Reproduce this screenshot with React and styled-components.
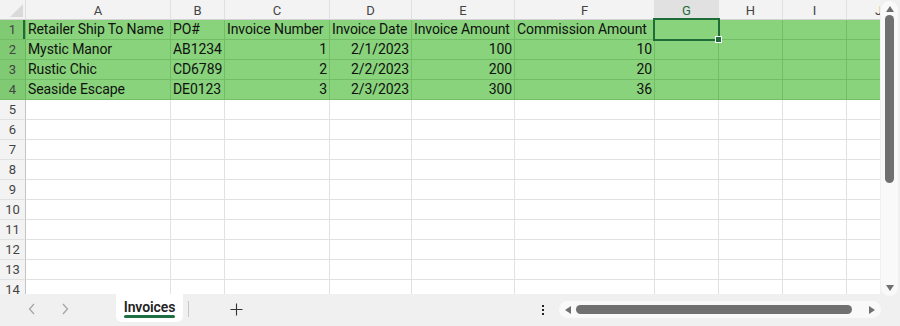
import React from "react";
import styled, { createGlobalStyle, css } from "styled-components";

const Global = createGlobalStyle`
  html, body { margin: 0; padding: 0; background: #f0f0f0; }
  * { box-sizing: border-box; }
`;

const COLS = [145, 54, 105, 82, 103, 140, 64, 64, 64, 64];
const LETTERS = ["A", "B", "C", "D", "E", "F", "G", "H", "I", "J"];
const SELECTED_COL = 6;

const DATA = [
  [
    { v: "Retailer Ship To Name" },
    { v: "PO#" },
    { v: "Invoice Number" },
    { v: "Invoice Date" },
    { v: "Invoice Amount" },
    { v: "Commission Amount" },
  ],
  [
    { v: "Mystic Manor" },
    { v: "AB1234" },
    { v: "1", r: true },
    { v: "2/1/2023", r: true },
    { v: "100", r: true },
    { v: "10", r: true },
  ],
  [
    { v: "Rustic Chic" },
    { v: "CD6789" },
    { v: "2", r: true },
    { v: "2/2/2023", r: true },
    { v: "200", r: true },
    { v: "20", r: true },
  ],
  [
    { v: "Seaside Escape" },
    { v: "DE0123" },
    { v: "3", r: true },
    { v: "2/3/2023", r: true },
    { v: "300", r: true },
    { v: "36", r: true },
  ],
];

const Page = styled.div`
  width: 900px;
  height: 326px;
  display: flex;
  flex-direction: column;
  background: #f0f0f0;
  font-family: Roboto, "Liberation Sans", Arial, sans-serif;
  overflow: hidden;
`;

const Main = styled.div`
  display: flex;
  height: 294px;
`;

const Viewport = styled.div`
  position: relative;
  width: 880px;
  height: 294px;
  overflow: hidden;
  background: #fff;
`;

const Grid = styled.div`
  display: grid;
  grid-template-columns: 26px ${COLS.map((c) => c + "px").join(" ")};
  grid-auto-rows: 20px;
`;

const Corner = styled.div`
  background: #f3f3f3;
  border-right: 1px solid #dedede;
  border-bottom: 1px solid #d2d2d2;
  display: flex;
  align-items: flex-end;
  justify-content: flex-end;
  padding: 0 2px 2px 0;
`;

const ColHead = styled.div`
  background: ${(p) => (p.$sel ? "#e1e1e1" : "#f3f3f3")};
  color: ${(p) => (p.$sel ? "#1e6c3b" : "#444")};
  border-right: 1px solid #e0e0e0;
  border-bottom: 1px solid ${(p) => (p.$sel ? "#1e6c37" : "#d2d2d2")};
  font-size: 13px;
  display: flex;
  align-items: center;
  justify-content: center;
  padding-top: 1px;
`;

const RowHead = styled.div`
  background: ${(p) => (p.$fill ? "#7fca72" : "#f3f3f3")};
  color: #444;
  border-right: 1px solid ${(p) => (p.$fill ? "#6cb460" : "#c4c4c4")};
  border-bottom: 1px solid ${(p) => (p.$fill ? "#74bd67" : "#e1e1e1")};
  font-size: 13px;
  display: flex;
  align-items: center;
  justify-content: center;
  ${(p) =>
    p.$sel &&
    css`
      box-shadow: inset -2px 0 0 #1e6c37;
    `}
`;

const Cell = styled.div`
  background: ${(p) => (p.$fill ? "#88d37b" : "#fff")};
  border-right: 1px solid ${(p) => (p.$fill ? "#74bd67" : "#e1e1e1")};
  border-bottom: 1px solid ${(p) => (p.$fill ? "#74bd67" : "#e1e1e1")};
  color: #111;
  font-size: 14px;
  line-height: 19px;
  padding: 0 2px 0 2px;
  white-space: nowrap;
  overflow: visible;
  text-align: ${(p) => (p.$right ? "right" : "left")};
  letter-spacing: -0.1px;
`;

const Selection = styled.div`
  position: absolute;
  left: 653px;
  top: 18px;
  width: 67px;
  height: 23px;
  border: 2px solid #1e6c37;
  pointer-events: none;
`;

const Handle = styled.div`
  position: absolute;
  left: 715px;
  top: 36px;
  width: 7px;
  height: 7px;
  background: #1e6c37;
  border: 1px solid #fff;
`;

const VScroll = styled.div`
  width: 20px;
  background: #f0f0f0;
  padding: 1px 2px 0 1px;
  display: flex;
`;

const VTrack = styled.div`
  flex: 1;
  height: 295px;
  background: #f9f9f9;
  border-radius: 9px;
  display: flex;
  flex-direction: column;
  align-items: center;
  padding: 4px 0 4px;
  position: relative;
  z-index: 1;
`;

const VThumb = styled.div`
  width: 9px;
  height: 168px;
  margin-top: 2px;
  background: #707070;
  border-radius: 5px;
`;

const Spacer = styled.div`
  flex: 1;
`;

const SheetBar = styled.div`
  height: 32px;
  display: flex;
  align-items: flex-start;
  background: #f0f0f0;
`;

const NavGroup = styled.div`
  width: 116px;
  height: 30px;
  display: flex;
  align-items: center;
  padding-left: 24px;
  gap: 17px;
`;

const NavBtn = styled.div`
  width: 16px;
  height: 16px;
  display: flex;
  align-items: center;
  justify-content: center;
`;

const Tab = styled.div`
  position: relative;
  width: 67px;
  height: 28px;
  background: #fff;
  border-radius: 0 0 6px 6px;
  display: flex;
  justify-content: center;
  padding-top: 5px;
  font-size: 14px;
  font-weight: 600;
  color: #242424;
  letter-spacing: -0.1px;
  &::after {
    content: "";
    position: absolute;
    left: 8px;
    right: 8px;
    bottom: 4px;
    height: 3px;
    border-radius: 2px;
    background: #1e7044;
  }
`;

const Divider = styled.div`
  width: 1px;
  height: 16px;
  margin: 7px 0 0 5px;
  background: #c6c6c6;
`;

const AddBtn = styled.div`
  width: 32px;
  height: 30px;
  margin-left: 31px;
  display: flex;
  align-items: center;
  justify-content: center;
`;

const MoreBtn = styled.div`
  width: 16px;
  height: 30px;
  margin-right: 8px;
  display: flex;
  flex-direction: column;
  align-items: center;
  justify-content: center;
  gap: 2px;
  padding-top: 1px;
  span {
    width: 2px;
    height: 2px;
    background: #222;
  }
`;

const HTrack = styled.div`
  width: 322px;
  height: 17px;
  margin-top: 7px;
  margin-right: 19px;
  background: #f9f9f9;
  border-radius: 9px;
  display: flex;
  align-items: center;
  padding: 0 5px;
`;

const HThumb = styled.div`
  width: 276px;
  height: 9px;
  margin-left: 4px;
  background: #707070;
  border-radius: 5px;
`;

const Chevron = ({ dir }) => (
  <svg width="8" height="12" viewBox="0 0 8 12">
    <polyline
      points={dir === "left" ? "6,1 1.5,6 6,11" : "2,1 6.5,6 2,11"}
      fill="none"
      stroke="#a3a3a3"
      strokeWidth="1.2"
    />
  </svg>
);

const Tri = ({ dir, size = 8 }) => {
  const pts = {
    up: "0,7 4,1 8,7",
    down: "0,1 4,7 8,1",
    left: "7,0 1,4 7,8",
    right: "1,0 7,4 1,8",
  }[dir];
  return (
    <svg width={size} height={size} viewBox="0 0 8 8">
      <polygon points={pts} fill="#707070" />
    </svg>
  );
};

export default function App() {
  const rows = [];
  for (let r = 1; r <= 14; r++) {
    const fill = r <= 4;
    rows.push(
      <RowHead key={`h${r}`} $fill={fill} $sel={r === 1}>
        {r}
      </RowHead>
    );
    COLS.forEach((_, c) => {
      const d = fill ? DATA[r - 1][c] : null;
      rows.push(
        <Cell key={`${r}-${c}`} $fill={fill} $right={d && d.r}>
          {d ? d.v : ""}
        </Cell>
      );
    });
  }

  return (
    <Page>
      <Global />
      <Main>
        <Viewport>
          <Grid>
            <Corner>
              <svg width="13" height="13" viewBox="0 0 13 13">
                <polygon points="13,0 13,13 0,13" fill="#d9d9d9" />
              </svg>
            </Corner>
            {LETTERS.map((l, i) => (
              <ColHead key={l} $sel={i === SELECTED_COL}>
                {l}
              </ColHead>
            ))}
            {rows}
          </Grid>
          <Selection />
          <Handle />
        </Viewport>
        <VScroll>
          <VTrack>
            <Tri dir="up" />
            <VThumb />
            <Spacer />
            <Tri dir="down" />
          </VTrack>
        </VScroll>
      </Main>
      <SheetBar>
        <NavGroup>
          <NavBtn>
            <Chevron dir="left" />
          </NavBtn>
          <NavBtn>
            <Chevron dir="right" />
          </NavBtn>
        </NavGroup>
        <Tab>Invoices</Tab>
        <Divider />
        <AddBtn>
          <svg width="13" height="13" viewBox="0 0 13 13">
            <path d="M6.5 0.5v12M0.5 6.5h12" stroke="#333" strokeWidth="1.1" fill="none" />
          </svg>
        </AddBtn>
        <Spacer />
        <MoreBtn>
          <span />
          <span />
          <span />
        </MoreBtn>
        <HTrack>
          <Tri dir="left" />
          <HThumb />
          <Spacer />
          <Tri dir="right" />
        </HTrack>
      </SheetBar>
    </Page>
  );
}
